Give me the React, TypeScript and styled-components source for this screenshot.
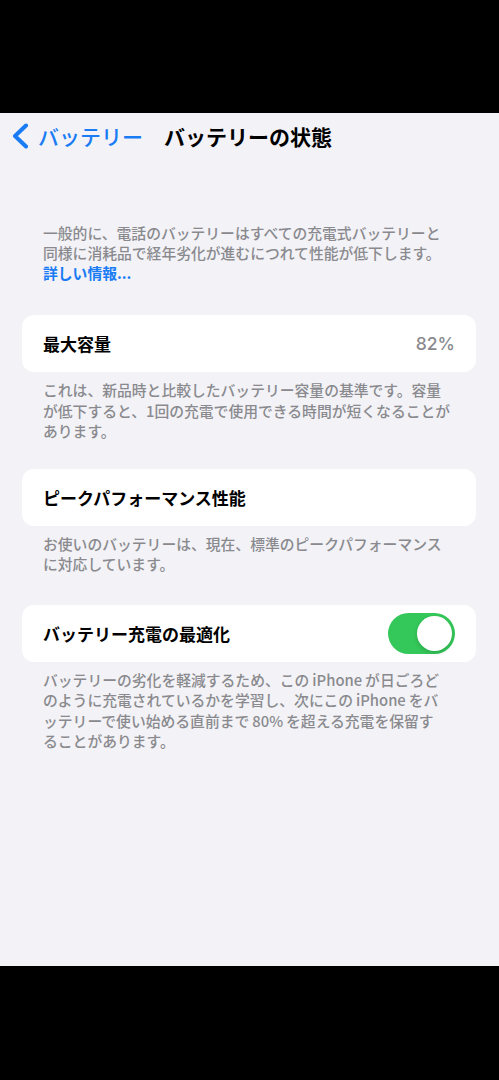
import React from "react";
import styled, { createGlobalStyle } from "styled-components";

const GlobalStyle = createGlobalStyle`
  html, body {
    margin: 0;
    padding: 0;
    background: #000;
  }
  body {
    font-family: "Noto Sans CJK JP", "Noto Sans", sans-serif;
    -webkit-font-smoothing: antialiased;
  }
`;

const Page = styled.div`
  width: 499px;
  height: 1080px;
  display: flex;
  flex-direction: column;
  background: #000;
`;

const BlackBar = styled.div<{ $h: number }>`
  height: ${(p) => p.$h}px;
  flex-shrink: 0;
  background: #000;
`;

const Screen = styled.div`
  flex: 1;
  background: #f2f2f7;
  display: flex;
  flex-direction: column;
`;

const NavBar = styled.div`
  height: 46px;
  display: flex;
  align-items: center;
  padding-left: 11px;
`;

const BackLink = styled.div`
  display: flex;
  align-items: center;
  gap: 9px;
  color: #1a7cf4;
  font-size: 21px;
  font-weight: 500;
  line-height: 1;
  margin-right: 21px;
`;

const NavTitle = styled.div`
  font-size: 21px;
  font-weight: 700;
  color: #000;
  line-height: 1;
`;

const Intro = styled.div`
  margin: 64px 0 32px;
  padding: 0 20px 0 43px;
  font-size: 14.8px;
  font-weight: 500;
  line-height: 20px;
  color: #8a8a8e;
  white-space: nowrap;
`;

const MoreLink = styled.span`
  color: #1a7cf4;
  font-weight: 700;
`;

const Card = styled.div`
  margin: 0 23px 0 22px;
  height: 57px;
  background: #fff;
  border-radius: 12px;
  display: flex;
  align-items: center;
  justify-content: space-between;
  padding: 0 21px;
  box-sizing: border-box;
`;

const CardLabel = styled.div`
  font-size: 17px;
  font-weight: 700;
  color: #000;
`;

const CardValue = styled.div`
  font-family: Inter, "Noto Sans", sans-serif;
  font-size: 17.5px;
  font-weight: 500;
  color: #8a8a8e;
`;

const Footer = styled.div<{ $gap: number }>`
  padding: 8px 20px 0 43px;
  margin-bottom: ${(p) => p.$gap}px;
  font-size: 14.8px;
  font-weight: 500;
  line-height: 20.5px;
  color: #8a8a8e;
  white-space: nowrap;
`;

const Latin = styled.span`
  margin: 0 3px;
`;

const Toggle = styled.div<{ $on: boolean }>`
  width: 67px;
  height: 41px;
  border-radius: 21px;
  background: ${(p) => (p.$on ? "#34c759" : "#e9e9ea")};
  display: flex;
  align-items: center;
  justify-content: ${(p) => (p.$on ? "flex-end" : "flex-start")};
  padding: 0 3px;
  box-sizing: border-box;
`;

const Knob = styled.div`
  width: 35px;
  height: 35px;
  border-radius: 50%;
  background: #fff;
  box-shadow: 0 2px 4px rgba(0, 0, 0, 0.15);
`;

const Chevron = () => (
  <svg width="18" height="26" viewBox="0 0 18 26">
    <polyline
      points="15,2.5 4,13 15,23.5"
      fill="none"
      stroke="#1a7cf4"
      strokeWidth="4"
      strokeLinecap="round"
      strokeLinejoin="round"
    />
  </svg>
);

export default function App() {
  return (
    <Page>
      <GlobalStyle />
      <BlackBar $h={113} />
      <Screen>
        <NavBar>
          <BackLink>
            <Chevron />
            バッテリー
          </BackLink>
          <NavTitle>バッテリーの状態</NavTitle>
        </NavBar>

        <Intro>
          一般的に、電話のバッテリーはすべての充電式バッテリーと
          <br />
          同様に消耗品で経年劣化が進むにつれて性能が低下します。
          <br />
          <MoreLink>詳しい情報...</MoreLink>
        </Intro>

        <Card>
          <CardLabel>最大容量</CardLabel>
          <CardValue>82%</CardValue>
        </Card>
        <Footer $gap={27}>
          これは、新品時と比較したバッテリー容量の基準です。容量
          <br />
          が低下すると、1回の充電で使用できる時間が短くなることが
          <br />
          あります。
        </Footer>

        <Card>
          <CardLabel>ピークパフォーマンス性能</CardLabel>
        </Card>
        <Footer $gap={30}>
          お使いのバッテリーは、現在、標準のピークパフォーマンス
          <br />
          に対応しています。
        </Footer>

        <Card>
          <CardLabel>バッテリー充電の最適化</CardLabel>
          <Toggle $on>
            <Knob />
          </Toggle>
        </Card>
        <Footer $gap={0}>
          バッテリーの劣化を軽減するため、この<Latin>iPhone</Latin>が日ごろど
          <br />
          のように充電されているかを学習し、次にこの<Latin>iPhone</Latin>をバ
          <br />
          ッテリーで使い始める直前まで<Latin>80%</Latin>を超える充電を保留す
          <br />
          ることがあります。
        </Footer>
      </Screen>
      <BlackBar $h={114} />
    </Page>
  );
}
